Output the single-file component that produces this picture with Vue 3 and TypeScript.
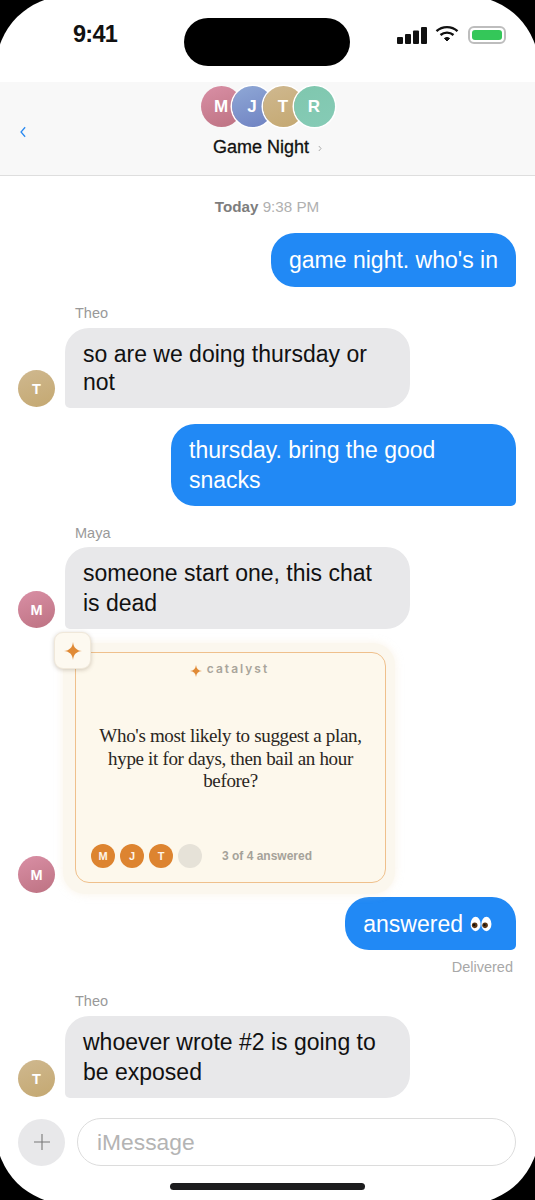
<script setup lang="ts">
interface Person { initial: string; tone: string }
const people: Person[] = [
  { initial: 'M', tone: 'rose' },
  { initial: 'J', tone: 'blue' },
  { initial: 'T', tone: 'sand' },
  { initial: 'R', tone: 'mint' },
]
const answered: string[] = ['M', 'J', 'T']
</script>

<template>
  <div class="phone">
    <div class="screen">
      <div class="status">
        <span class="time">9:41</span>
        <div class="island"></div>
        <div class="indicators">
          <svg class="signal" width="30" height="17" viewBox="0 0 30 17" fill="#111">
            <rect x="0" y="10" width="6" height="7" rx="1" />
            <rect x="8" y="7" width="6" height="10" rx="1" />
            <rect x="16" y="3.5" width="6" height="13.5" rx="1" />
            <rect x="24" y="0" width="6" height="17" rx="1" />
          </svg>
          <svg class="wifi" width="24" height="17" viewBox="0 0 24 17" fill="none" stroke="#111" stroke-width="2.4" stroke-linecap="butt">
            <path d="M1.5 6.2C7.5 .8 16.5 .8 22.5 6.2" />
            <path d="M5.5 10C9.2 6.8 14.8 6.8 18.5 10" />
            <path d="M9.4 13.4C11 12.2 13 12.2 14.6 13.4L12 16Z" fill="#111" stroke-width="1" />
          </svg>
          <div class="battery"><div class="charge"></div></div>
        </div>
      </div>

      <header class="nav">
        <svg class="back" width="6" height="12" viewBox="0 0 7 13" fill="none" stroke="#2b8af0" stroke-width="1.5">
          <path d="M6 1L1.2 6.5L6 12" />
        </svg>
        <div class="group">
          <div class="stack">
            <span v-for="p in people" :key="p.initial" class="stack-avatar" :class="p.tone">{{ p.initial }}</span>
          </div>
          <div class="title-row">
            <span class="title">Game Night</span>
            <svg class="disclosure" width="4" height="7" viewBox="0 0 4 7" fill="none" stroke="#aaa" stroke-width="1">
              <path d="M.8 1L3 3.5L.8 6" />
            </svg>
          </div>
        </div>
      </header>

      <main class="thread">
        <p class="stamp"><b>Today</b> 9:38 PM</p>

        <div class="bubble mine first">game night. who's in</div>

        <p class="sender">Theo</p>
        <div class="row">
          <span class="avatar sand">T</span>
          <div class="bubble theirs tight">so are we doing thursday or not</div>
        </div>

        <div class="bubble mine wide">thursday. bring the good snacks</div>

        <p class="sender maya">Maya</p>
        <div class="row">
          <span class="avatar rose">M</span>
          <div class="bubble theirs">someone start one, this chat is dead</div>
        </div>

        <div class="row card-row">
          <span class="avatar rose">M</span>
          <article class="card">
            <div class="badge">
              <svg width="18" height="18" viewBox="0 0 18 18" fill="#e08a36">
                <path d="M9 0C9.6 5.6 12.4 8.4 18 9C12.4 9.6 9.6 12.4 9 18C8.4 12.4 5.6 9.6 0 9C5.6 8.4 8.4 5.6 9 0Z" />
              </svg>
            </div>
            <div class="card-inner">
              <div class="brand">
                <svg width="12" height="12" viewBox="0 0 18 18" fill="#e08a36">
                  <path d="M9 0C9.6 5.6 12.4 8.4 18 9C12.4 9.6 9.6 12.4 9 18C8.4 12.4 5.6 9.6 0 9C5.6 8.4 8.4 5.6 9 0Z" />
                </svg>
                <span>catalyst</span>
              </div>
              <p class="question">Who's most likely to suggest a plan, hype it for days, then bail an hour before?</p>
              <div class="progress">
                <span v-for="a in answered" :key="a" class="mini done">{{ a }}</span>
                <span class="mini"></span>
                <span class="progress-text">3 of 4 answered</span>
              </div>
            </div>
          </article>
        </div>

        <div class="bubble mine reply">
          answered
          <svg class="eyes" width="22" height="18" viewBox="0 0 24 20">
            <ellipse cx="6" cy="10" rx="5.6" ry="8" fill="#fff" />
            <ellipse cx="18" cy="10" rx="5.6" ry="8" fill="#fff" />
            <circle cx="5" cy="11.5" r="3.1" fill="#5a3514" />
            <circle cx="16.5" cy="11.5" r="3.1" fill="#5a3514" />
            <circle cx="4.4" cy="11" r="1.3" fill="#111" />
            <circle cx="15.9" cy="11" r="1.3" fill="#111" />
          </svg>
        </div>
        <p class="delivered">Delivered</p>

        <p class="sender theo-last">Theo</p>
        <div class="row">
          <span class="avatar sand">T</span>
          <div class="bubble theirs">whoever wrote #2 is going to be exposed</div>
        </div>
      </main>

      <footer class="composer">
        <div class="plus">
          <svg width="16" height="16" viewBox="0 0 16 16" stroke="#777" stroke-width="1.1">
            <path d="M8 0V16M0 8H16" />
          </svg>
        </div>
        <div class="input">iMessage</div>
      </footer>
      <div class="home-wrap"><div class="home"></div></div>
    </div>
  </div>
</template>

<style>
html, body { margin: 0; background: #000; }
</style>

<style scoped>
.phone {
  width: 535px;
  height: 1200px;
  background: #000;
  overflow: hidden;
  font-family: "Liberation Sans", Arial, sans-serif;
}
.screen {
  width: 543px;
  height: 1208px;
  margin: -4px;
  padding: 4px;
  box-sizing: border-box;
  background: #fff;
  border-radius: 72px;
  display: flex;
  flex-direction: column;
  overflow: hidden;
}
.status {
  height: 82px;
  flex: none;
  display: flex;
  align-items: flex-start;
  box-sizing: border-box;
  padding-top: 18px;
}
.time {
  width: 184px;
  flex: none;
  box-sizing: border-box;
  padding-left: 73px;
  padding-top: 2px;
  font-size: 23.5px;
  letter-spacing: -0.7px;
  line-height: 28px;
  font-weight: 700;
  color: #111;
  white-space: nowrap;
}
.island {
  width: 166px;
  height: 48px;
  border-radius: 24px;
  background: #000;
  flex: none;
}
.indicators {
  margin-left: 47px;
  display: flex;
  align-items: center;
  padding-top: 8px;
}
.signal { margin-top: 1px; }
.wifi { margin-left: 8px; margin-top: -3px; }
.battery {
  margin-left: 9px;
  width: 38px;
  height: 18px;
  box-sizing: border-box;
  border: 2px solid #bdbdbd;
  border-radius: 6px;
  padding: 2px;
}
.charge { height: 100%; background: #34c759; border-radius: 3px; }

.nav {
  height: 94px;
  flex: none;
  box-sizing: border-box;
  background: #f8f8f8;
  border-bottom: 1.5px solid #dedede;
  display: grid;
  grid-template-columns: 1fr auto 1fr;
  padding-top: 4px;
}
.back { align-self: center; margin-left: 20px; margin-top: 2px; }
.group { display: flex; flex-direction: column; align-items: center; }
.stack { display: flex; }
.stack-avatar {
  width: 41px;
  height: 41px;
  box-sizing: border-box;
  border-radius: 50%;
  display: flex;
  align-items: center;
  justify-content: center;
  color: #fff;
  font-size: 17px;
  font-weight: 700;
  box-shadow: 0 0 0 1.5px #fff;
}
.stack-avatar:first-child { box-shadow: none; }
.stack-avatar + .stack-avatar { margin-left: -10px; }
.title-row { display: flex; align-items: center; margin-top: 9px; }
.title {
  font-size: 18px;
  line-height: 22px;
  color: #111;
  -webkit-text-stroke: 0.3px #111;
}
.disclosure { margin-left: 9px; margin-top: 2px; }

.rose { background: linear-gradient(160deg, #d98fa5, #bd7282); }
.blue { background: linear-gradient(160deg, #8fa8d6, #6f82c2); }
.sand { background: linear-gradient(160deg, #cfb88f, #c4a871); }
.mint { background: linear-gradient(160deg, #7fc7ae, #86cbb6); }

.thread {
  flex: 1;
  min-height: 0;
  display: flex;
  flex-direction: column;
  padding: 22px 19px 0 18px;
}
.stamp {
  margin: 0;
  text-align: center;
  font-size: 15.2px;
  line-height: 17px;
  color: #b0b0b0;
}
.stamp b { color: #7d7d7d; }
.bubble {
  font-size: 23px;
  line-height: 30px;
  padding: 11px 18px;
  box-sizing: border-box;
  border-radius: 24px;
}
.mine {
  align-self: flex-end;
  background: #2189f5;
  color: #fff;
  border-bottom-right-radius: 5px;
}
.theirs {
  width: 345px;
  background: #e8e8ea;
  color: #111;
  border-bottom-left-radius: 5px;
}
.tight { line-height: 28px; padding: 12px 18px; }
.first { margin-top: 18px; padding: 12px 18px; }
.wide { width: 345px; margin-top: 16px; }
.sender {
  margin: 18px 0 6px 57px;
  font-size: 14.5px;
  line-height: 17px;
  color: #999;
}
.maya { margin-top: 19px; margin-bottom: 5px; }
.theo-last { margin-top: 17px; margin-bottom: 6px; }
.row { display: flex; align-items: flex-end; gap: 10px; }
.avatar {
  width: 37px;
  height: 37px;
  border-radius: 50%;
  flex: none;
  margin-bottom: 1px;
  display: flex;
  align-items: center;
  justify-content: center;
  color: #fff;
  font-size: 14.5px;
  font-weight: 700;
}
.card-row { margin-top: 14px; }
.card {
  position: relative;
  width: 332px;
  height: 251px;
  box-sizing: border-box;
  margin-left: -2px;
  padding: 9px 9px 11px 12px;
  background: #fbf7ee;
  border-radius: 22px;
  box-shadow: 0 0 8px rgba(240, 220, 190, .35);
}
.badge {
  position: absolute;
  left: -9px;
  top: -11px;
  width: 37px;
  height: 37px;
  box-sizing: border-box;
  background: #fdf9f0;
  border-radius: 9px;
  border: 1px solid #f0e8da;
  box-shadow: 0 1px 4px rgba(110, 90, 60, .3);
  display: flex;
  align-items: center;
  justify-content: center;
  z-index: 1;
}
.card-inner {
  height: 100%;
  box-sizing: border-box;
  background: #fdf8ec;
  border: 1.5px solid #efc08c;
  border-radius: 14px;
  display: flex;
  flex-direction: column;
  align-items: center;
  padding: 7px 14px 14px;
}
.brand {
  display: flex;
  align-items: center;
  gap: 5px;
  height: 16px;
  margin-left: -2px;
  font-family: Inter, sans-serif;
  font-size: 12px;
  font-weight: 600;
  letter-spacing: 2px;
  color: #a9a59b;
}
.brand svg { margin-top: 6px; }
.question {
  margin: 49px 0 0;
  text-align: center;
  font-family: "Liberation Serif", serif;
  font-size: 19px;
  letter-spacing: -0.33px;
  line-height: 22.5px;
  color: #2a2622;
}
.progress {
  margin-top: auto;
  align-self: stretch;
  display: flex;
  align-items: center;
  gap: 5px;
  padding-left: 1px;
}
.mini {
  width: 24px;
  height: 24px;
  border-radius: 50%;
  background: #e6e2d8;
  display: flex;
  align-items: center;
  justify-content: center;
  font-size: 11px;
  font-weight: 700;
  color: #fdf5e8;
}
.done { background: #dd8430; }
.progress-text {
  margin-left: 15px;
  font-size: 12px;
  font-weight: 700;
  color: #a5a29a;
}
.reply {
  margin-top: 3px;
  display: flex;
  align-items: center;
  gap: 7px;
  height: 53px;
  padding-right: 24px;
}
.delivered {
  margin: 9px 3px 0 0;
  align-self: flex-end;
  font-size: 14.5px;
  line-height: 17px;
  color: #a8a8a8;
}
.composer {
  flex: none;
  display: flex;
  align-items: center;
  gap: 12px;
  padding: 0 19px 0 18px;
  height: 48px;
}
.plus {
  width: 47px;
  height: 47px;
  border-radius: 50%;
  background: #e8e8ea;
  display: flex;
  align-items: center;
  justify-content: center;
  flex: none;
}
.input {
  flex: 1;
  height: 48px;
  box-sizing: border-box;
  border: 1.5px solid #dcdcdc;
  border-radius: 24px;
  padding-left: 19px;
  font-size: 22.8px;
  line-height: 47px;
  color: #b4b4b4;
}
.home-wrap {
  flex: none;
  height: 34px;
  padding-top: 17px;
  box-sizing: border-box;
  display: flex;
  justify-content: center;
}
.home {
  width: 195px;
  height: 7px;
  background: #1c1c1e;
  border-radius: 4px;
}
</style>
